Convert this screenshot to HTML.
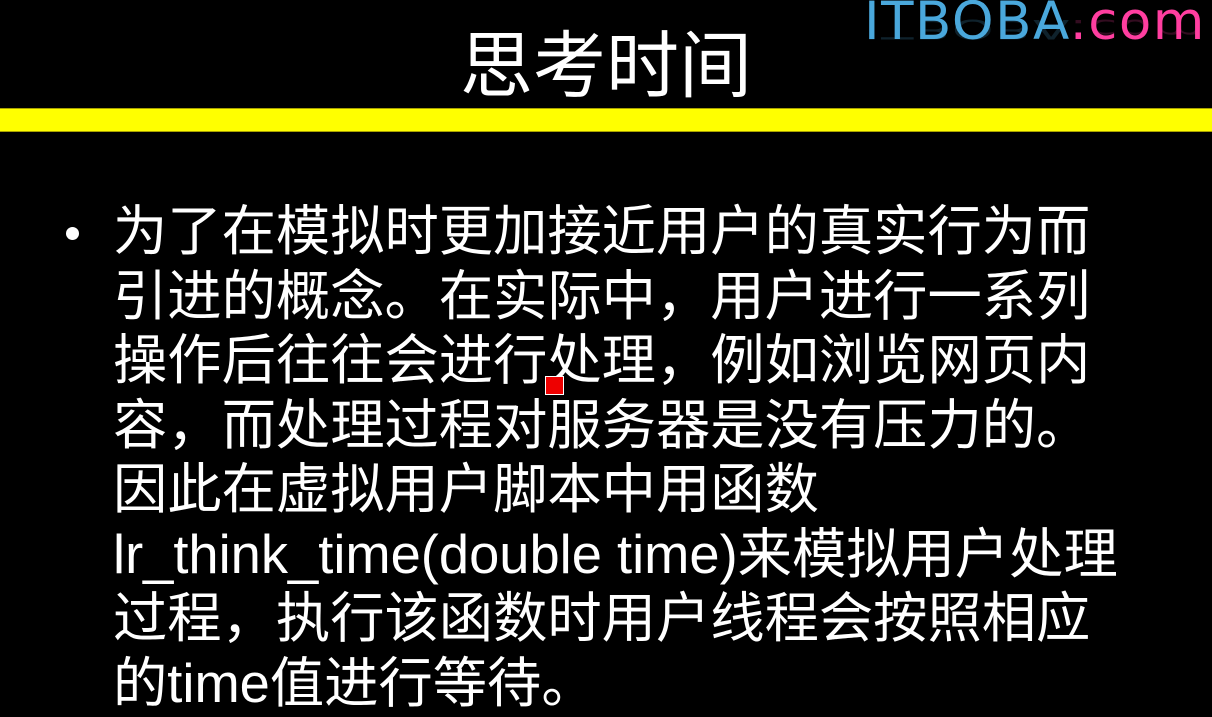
<!DOCTYPE html>
<html><head><meta charset="utf-8"><style>
html,body{margin:0;padding:0;background:#000;width:1212px;height:717px;overflow:hidden;position:relative}
.logo{position:absolute;left:864px;top:-9px;font-family:"DejaVu Sans","Liberation Sans",sans-serif;font-size:53px;letter-spacing:1.5px;white-space:nowrap}
.logo .a{color:#4aa8dc}.logo .b{color:#ff3ea0}
.refl{position:absolute;left:864px;top:44px;font-family:"DejaVu Sans","Liberation Sans",sans-serif;font-size:53px;letter-spacing:1.5px;transform:scaleY(-0.5);transform-origin:top;opacity:.2;white-space:nowrap}
.title{position:absolute;left:0;width:1212px;top:26px;text-align:center;color:#fff;font-family:"Liberation Sans","Noto Sans CJK SC",sans-serif;font-size:73px;line-height:82px}
.bar{position:absolute;left:0;top:108px;width:1212px;height:22px;background:#ffff00;border-top:1px solid #aaa200;border-bottom:1px solid #aaa200}
.body{position:absolute;left:113px;top:200px;color:#fff;font-family:"Liberation Sans","Noto Sans CJK SC",sans-serif;font-size:54.3px;line-height:64.5px;white-space:nowrap}
.dot{position:absolute;left:66px;top:227px;width:13px;height:13px;border-radius:50%;background:#fff}
.red{position:absolute;left:545px;top:376px;width:17px;height:17px;background:#ee0000;border:1px solid #fff}
</style></head><body>
<div class="logo"><span class="a">ITBOBA</span><span class="b">.com</span></div>
<div class="refl"><span style="color:#4aa8dc">ITBOBA</span><span style="color:#ff3ea0">.com</span></div>
<div class="title">思考时间</div>
<div class="bar"></div>
<div class="dot"></div>
<div class="body">为了在模拟时更加接近用户的真实行为而<br>引进的概念。在实际中，用户进行一系列<br>操作后往往会进行处理，例如浏览网页内<br>容，而处理过程对服务器是没有压力的。<br>因此在虚拟用户脚本中用函数<br>lr_think_time(double time)来模拟用户处理<br>过程，执行该函数时用户线程会按照相应<br>的time值进行等待。</div>
<div class="red"></div>
</body></html>
